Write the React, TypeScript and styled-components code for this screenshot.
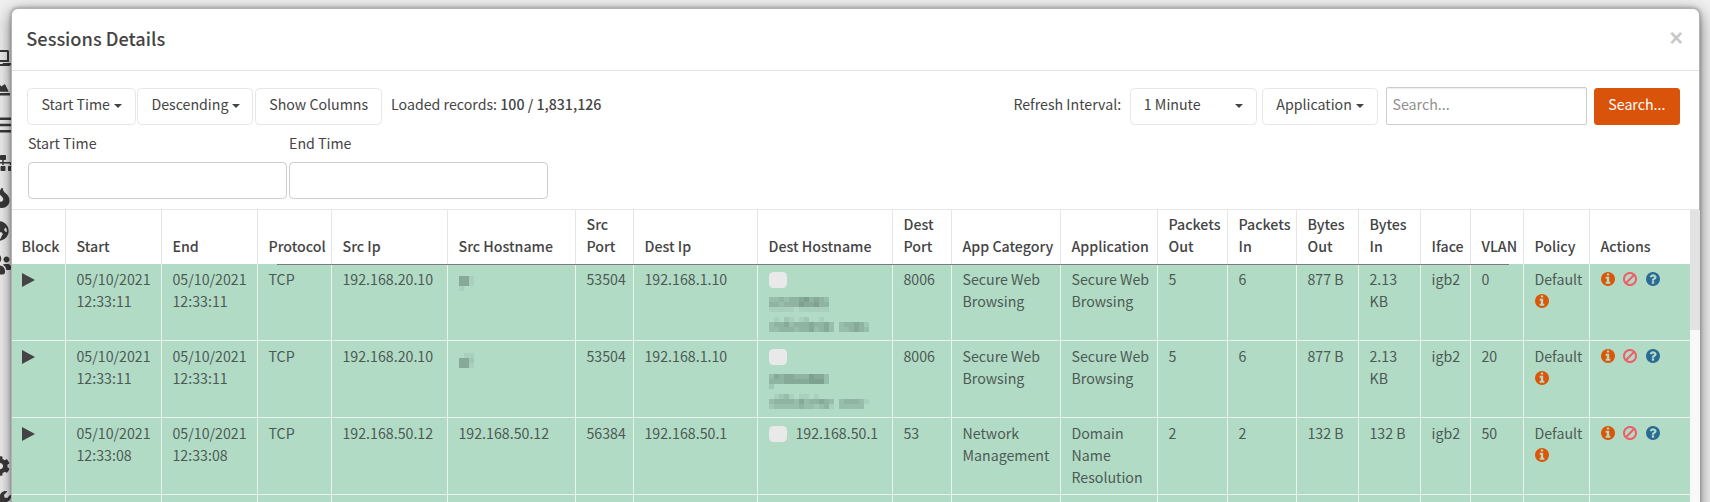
import React from "react";
import styled, { createGlobalStyle } from "styled-components";
import {
  FaLaptop,
  FaChartArea,
  FaTasks,
  FaSitemap,
  FaFire,
  FaGlobeAmericas,
  FaUsers,
  FaCog,
  FaWrench,
} from "react-icons/fa";

const Global = createGlobalStyle`
  html, body { margin: 0; padding: 0; height: 100%; overflow: hidden; background: #f0f0f0; }
  #root { height: 100%; }
  * { box-sizing: border-box; }
  body {
    font-family: "Noto Sans CJK SC", "Liberation Sans", sans-serif;
    font-size: 14.2px;
    line-height: 22px;
    color: #444;
  }
`;

const Page = styled.div`
  display: flex;
  height: 502px;
  overflow: hidden;
`;

const Sidebar = styled.nav`
  width: 10.5px;
  flex: none;
  overflow: hidden;
  display: flex;
  flex-direction: column;
  color: #3a3a3a;
`;

const SideIcon = styled.span<{ $top: number; $left: number; $size: number }>`
  display: block;
  height: ${(p) => p.$size}px;
  margin-top: ${(p) => p.$top}px;
  margin-left: ${(p) => p.$left}px;
  font-size: ${(p) => p.$size}px;
  line-height: ${(p) => p.$size}px;
  svg { display: block; }
`;

const Modal = styled.div`
  position: relative;
  width: 1689.5px;
  flex: none;
  height: 640px;
  margin-top: 7.5px;
  background: #fff;
  border: 1px solid rgba(0, 0, 0, 0.3);
  border-radius: 6.6px;
  box-shadow: 0 5.5px 16.5px rgba(0, 0, 0, 0.5), 0 0 4px rgba(0, 0, 0, 0.35);
  display: flex;
  flex-direction: column;
`;

const Header = styled.header`
  flex: none;
  height: 62.5px;
  border-bottom: 1px solid #e5e5e5;
  padding: 0 16px 3px 14.8px;
  display: flex;
  align-items: center;
  justify-content: space-between;
`;

const Title = styled.h4`
  margin: 0;
  font-size: 18.2px;
  font-weight: 500;
  color: #444;
  line-height: 22px;
`;

const Close = styled.button`
  border: 0;
  background: none;
  padding: 0;
  font-family: "Liberation Sans", sans-serif;
  font-size: 23px;
  font-weight: 700;
  line-height: 22px;
  color: #c8c8c8;
`;

const Toolbar = styled.div`
  flex: none;
  display: flex;
  align-items: center;
  justify-content: space-between;
  padding: 16px 19.3px 0 15.8px;
  height: 54.5px;
`;

const ToolGroup = styled.div`
  display: flex;
  align-items: center;
`;

const Label = styled.span`
  position: relative;
  top: -2.5px;
`;

const Btn = styled.button<{ $gap?: number; $width?: number; $spread?: boolean }>`
  height: 37.4px;
  padding: 0 13.2px 5px;
  margin-right: ${(p) => p.$gap ?? 1.6}px;
  width: ${(p) => (p.$width ? `${p.$width}px` : "auto")};
  display: inline-flex;
  align-items: center;
  justify-content: ${(p) => (p.$spread ? "space-between" : "flex-start")};
  background: #fff;
  border: 1px solid #e7e7e7;
  border-radius: 4.4px;
  font: inherit;
  color: #444;
  white-space: nowrap;
`;

const Caret = styled.i`
  display: inline-block;
  width: 0;
  height: 0;
  margin-left: 4px;
  margin-top: 5px;
  border-top: 4.4px solid #444;
  border-left: 4.4px solid transparent;
  border-right: 4.4px solid transparent;
`;

const Loaded = styled(Label)`
  margin-left: 7.5px;
  color: #444;
  b { font-weight: 500; }
`;

const RefreshLabel = styled(Label)`
  margin-right: 8.5px;
`;

const SearchInput = styled.input`
  width: 201.5px;
  height: 38.4px;
  margin-left: 7.5px;
  margin-right: 7px;
  padding: 0 6px 4px;
  border: 1px solid #ccc;
  border-radius: 2px;
  box-shadow: inset 0 1px 1px rgba(0, 0, 0, 0.075);
  font: inherit;
  color: #444;
  &::placeholder { color: #8f8f8f; opacity: 1; }
`;

const SearchBtn = styled.button`
  width: 85.7px;
  height: 37.4px;
  padding: 0 0 5px;
  border: 1px solid #d9540a;
  border-radius: 3px;
  background: #d9540a;
  color: #fff;
  font: inherit;
`;

const DateRow = styled.div`
  flex: none;
  display: flex;
  padding-left: 16.5px;
  gap: 2.4px;
  margin-top: 8px;
`;

const DateField = styled.label`
  display: flex;
  flex-direction: column;
  width: 258.7px;
  height: 65.7px;
  span { height: 28px; line-height: 18px; }
`;

const DateInput = styled.input`
  width: 100%;
  height: 37.7px;
  border: 1px solid #ccc;
  border-radius: 4.4px;
  background: #fff;
`;

const TableArea = styled.div`
  flex: none;
  display: flex;
  margin-top: 9.6px;
  border-top: 1px solid #e7e7e7;
  position: relative;
`;

const Grid = styled.table`
  flex: none;
  width: 1678px;
  table-layout: fixed;
  border-collapse: separate;
  border-spacing: 0;
`;

const Th = styled.th`
  height: 54.5px;
  padding: 2px 5px 7.7px 11px;
  vertical-align: bottom;
  text-align: left;
  font-weight: 500;
  color: #444;
  background: #fff;
  border-left: 1px solid #e5e5e5;
  &:first-child { border-left: 0; padding-left: 10px; padding-right: 0; }
`;

const HeadRule = styled.div`
  position: absolute;
  left: 265.5px;
  width: 1232px;
  top: 54px;
  height: 1.3px;
  background: #7c7c7c;
`;

const Td = styled.td`
  height: 77px;
  padding: 3.6px 5px 6.1px 11px;
  vertical-align: top;
  color: #4c5a54;
  background: #b2dbc6;
  border-left: 1.3px solid #eaf3ee;
  border-bottom: 1.3px solid #eaf3ee;
  &:first-child { border-left: 0; padding-left: 10.5px; }
`;

const PlayIcon = styled.svg`
  display: block;
  width: 13px;
  height: 14px;
  margin-top: 5px;
  fill: #444;
`;

const Check = styled.span<{ $inline?: boolean }>`
  display: ${(p) => (p.$inline ? "inline-block" : "block")};
  width: 18px;
  height: 16px;
  margin-top: 4.4px;
  margin-bottom: ${(p) => (p.$inline ? 0 : 9)}px;
  margin-right: ${(p) => (p.$inline ? 9 : 0)}px;
  vertical-align: top;
  border-radius: 4.5px;
  background: #e9e9e9;
`;

const Mosaic = styled.svg<{ $top?: number }>`
  display: block;
  margin-top: ${(p) => p.$top ?? 0}px;
  filter: blur(0.7px);
`;

const IconRow = styled.span<{ $top?: number }>`
  display: flex;
  align-items: center;
  height: 22px;
  gap: 8.6px;
  margin-top: ${(p) => p.$top ?? 0}px;
`;

const Glyph = styled.svg<{ $color: string }>`
  display: block;
  width: 14px;
  height: 14px;
  fill: ${(p) => p.$color};
`;

const Track = styled.div`
  flex: none;
  width: 10px;
  height: 300px;
  background: #f8f8f8;
`;

const Thumb = styled.div`
  height: 120px;
  background: #e2e2e2;
`;

const sideIcons = [
  { Icon: FaLaptop, size: 20, top: 48, left: -9 },
  { Icon: FaChartArea, size: 20, top: 10, left: -10 },
  { Icon: FaTasks, size: 20, top: 17, left: -9 },
  { Icon: FaSitemap, size: 20, top: 18, left: -7 },
  { Icon: FaFire, size: 20, top: 15, left: -8 },
  { Icon: FaGlobeAmericas, size: 20, top: 13, left: -11 },
  { Icon: FaUsers, size: 30, top: 8, left: -19 },
  { Icon: FaCog, size: 20, top: 177, left: -10 },
  { Icon: FaWrench, size: 20, top: 15, left: -9 },
];

const columns = [53, 96, 96, 74, 116, 128, 58, 124, 135, 59, 109, 97, 70, 69, 62, 62, 50, 53, 66, 101];

const headers = [
  "Block", "Start", "End", "Protocol", "Src Ip", "Src Hostname", "Src Port", "Dest Ip",
  "Dest Hostname", "Dest Port", "App Category", "Application", "Packets Out", "Packets In",
  "Bytes Out", "Bytes In", "Iface", "VLAN", "Policy", "Actions",
];

type Row = {
  time: string; srcIp: string; srcHost?: string; srcPort: string; destIp: string; destHost?: string;
  destPort: string; category: string; app: string; pOut: string; pIn: string; bOut: string; bIn: string; vlan: string;
  mosaicSrc?: string[]; mosaicDest?: string[];
};

const rows: Row[] = [
  {
    time: "05/10/2021 12:33:11", srcIp: "192.168.20.10", srcPort: "53504", destIp: "192.168.1.10",
    destPort: "8006", category: "Secure Web Browsing", app: "Secure Web Browsing", pOut: "5", pIn: "6",
    bOut: "877 B", bIn: "2.13 KB", vlan: "0",
    mosaicSrc: ["5510", "5510", "1000"],
    mosaicDest: [
      "334344564543000000000000",
      "443444655644000000000000",
      "111110111111000000000000",
      "000000000000000000000000",
      "010210120010000000000000",
      "344534445445303445420000",
      "334443445345303345430000",
    ],
  },
  {
    time: "05/10/2021 12:33:11", srcIp: "192.168.20.10", srcPort: "53504", destIp: "192.168.1.10",
    destPort: "8006", category: "Secure Web Browsing", app: "Secure Web Browsing", pOut: "5", pIn: "6",
    bOut: "877 B", bIn: "2.13 KB", vlan: "20",
    mosaicSrc: ["0110", "5520", "5510"],
    mosaicDest: [
      "354554446553000000000000",
      "444555556663000000000000",
      "200000000000000000000000",
      "000000000000000000000000",
      "012310110100000000000000",
      "344443534454303444310000",
      "233333433234103333300000",
    ],
  },
  {
    time: "05/10/2021 12:33:08", srcIp: "192.168.50.12", srcHost: "192.168.50.12", srcPort: "56384",
    destIp: "192.168.50.1", destHost: "192.168.50.1", destPort: "53", category: "Network Management",
    app: "Domain Name Resolution", pOut: "2", pIn: "2", bOut: "132 B", bIn: "132 B", vlan: "50",
  },
];

const MosaicBlock: React.FC<{ data: string[]; top?: number }> = ({ data, top }) => (
  <Mosaic $top={top} width={data[0].length * 5} height={data.length * 5} aria-hidden="true">
    {data.flatMap((line, y) =>
      line.split("").map((c, x) => (
        <rect key={`${x}-${y}`} x={x * 5} y={y * 5} width={5} height={5} fill="#5b7a6a" fillOpacity={Number(c) / 10} />
      ))
    )}
  </Mosaic>
);

const INFO = "M1152 1376v-160q0-14-9-23t-23-9h-96v-512q0-14-9-23t-23-9h-320q-14 0-23 9t-9 23v160q0 14 9 23t23 9h96v320h-96q-14 0-23 9t-9 23v160q0 14 9 23t23 9h448q14 0 23-9t9-23zm-128-896v-160q0-14-9-23t-23-9h-192q-14 0-23 9t-9 23v160q0 14 9 23t23 9h192q14 0 23-9t9-23zm640 416q0 209-103 385.5t-279.5 279.5-385.5 103-385.5-103-279.5-279.5-103-385.5 103-385.5 279.5-279.5 385.5-103 385.5 103 279.5 279.5 103 385.5z";
const QUESTION = "M1024 1376v-192q0-14-9-23t-23-9h-192q-14 0-23 9t-9 23v192q0 14 9 23t23 9h192q14 0 23-9t9-23zm256-672q0-88-55.5-163t-138.5-116-170-41q-243 0-371 213-15 24 8 42l132 100q7 6 19 6 16 0 25-12 53-68 86-92 34-24 86-24 48 0 85.5 26t37.5 59q0 38-20 61t-68 45q-63 28-115.5 86.5t-52.5 125.5v36q0 14 9 23t23 9h192q14 0 23-9t9-23q0-19 21.5-49.5t54.5-49.5q32-18 49-28.5t46-35 44.5-48 28-60.5 12.5-81zm384 192q0 209-103 385.5t-279.5 279.5-385.5 103-385.5-103-279.5-279.5-103-385.5 103-385.5 279.5-279.5 385.5-103 385.5 103 279.5 279.5 103 385.5z";
const BAN = "M1440 893q0-161-87-295l-754 753q137 89 297 89 111 0 211.5-43.5t173.5-116.5 116-174.5 43-212.5zm-999 299l755-754q-135-91-300-91-148 0-273 73t-198 199-73 274q0 162 89 299zm1223-299q0 157-61 300t-163.5 246-245 164-298.5 61-298.5-61-245-164-163.5-246-61-300 61-299.5 163.5-245.5 245-164 298.5-61 298.5 61 245 164 163.5 245.5 61 299.5z";

const FaGlyph: React.FC<{ d: string; color: string }> = ({ d, color }) => (
  <Glyph $color={color} viewBox="128 128 1536 1536" aria-hidden="true"><path d={d} /></Glyph>
);

const Info = () => <FaGlyph d={INFO} color="#dc5608" />;

const App: React.FC = () => (
  <Page>
    <Global />
    <Sidebar>
      {sideIcons.map(({ Icon, size, top, left }, i) => (
        <SideIcon key={i} $size={size} $top={top} $left={left}><Icon /></SideIcon>
      ))}
    </Sidebar>
    <Modal>
      <Header>
        <Title>Sessions Details</Title>
        <Close>×</Close>
      </Header>
      <Toolbar>
        <ToolGroup>
          <Btn $width={108.3}>Start Time<Caret /></Btn>
          <Btn $width={116.3}>Descending<Caret /></Btn>
          <Btn $width={127} $gap={1.5}>Show Columns</Btn>
          <Loaded>Loaded records: <b>100 / 1,831,126</b></Loaded>
        </ToolGroup>
        <ToolGroup>
          <RefreshLabel>Refresh Interval:</RefreshLabel>
          <Btn $width={127.5} $gap={5} $spread>1 Minute<Caret /></Btn>
          <Btn $gap={0}>Application<Caret /></Btn>
          <SearchInput placeholder="Search..." />
          <SearchBtn>Search...</SearchBtn>
        </ToolGroup>
      </Toolbar>
      <DateRow>
        <DateField><span>Start Time</span><DateInput /></DateField>
        <DateField><span>End Time</span><DateInput /></DateField>
      </DateRow>
      <TableArea>
        <Grid>
          <colgroup>
            {columns.map((w, i) => <col key={i} style={{ width: w }} />)}
          </colgroup>
          <thead>
            <tr>{headers.map((h) => <Th key={h}>{h}</Th>)}</tr>
          </thead>
          <tbody>
            {rows.map((row, i) => (
              <tr key={i}>
                <Td><PlayIcon viewBox="0 0 13 14"><polygon points="0,0 13,7 0,14" /></PlayIcon></Td>
                <Td>{row.time}</Td>
                <Td>{row.time}</Td>
                <Td>TCP</Td>
                <Td>{row.srcIp}</Td>
                <Td>{row.mosaicSrc ? <MosaicBlock data={row.mosaicSrc} top={7.9} /> : row.srcHost}</Td>
                <Td>{row.srcPort}</Td>
                <Td>{row.destIp}</Td>
                <Td>
                  {row.mosaicDest ? (
                    <>
                      <Check />
                      <MosaicBlock data={row.mosaicDest} />
                    </>
                  ) : (
                    <><Check $inline />{row.destHost}</>
                  )}
                </Td>
                <Td>{row.destPort}</Td>
                <Td>{row.category}</Td>
                <Td>{row.app}</Td>
                <Td>{row.pOut}</Td>
                <Td>{row.pIn}</Td>
                <Td>{row.bOut}</Td>
                <Td>{row.bIn}</Td>
                <Td>igb2</Td>
                <Td>{row.vlan}</Td>
                <Td>Default <IconRow $top={0.4}><Info /></IconRow></Td>
                <Td><IconRow><Info /><FaGlyph d={BAN} color="#ee5f6a" /><FaGlyph d={QUESTION} color="#2a6a95" /></IconRow></Td>
              </tr>
            ))}
            <tr>
              {columns.map((_, i) => <Td key={i} />)}
            </tr>
          </tbody>
        </Grid>
        <HeadRule />
        <Track><Thumb /></Track>
      </TableArea>
    </Modal>
  </Page>
);

export default App;
